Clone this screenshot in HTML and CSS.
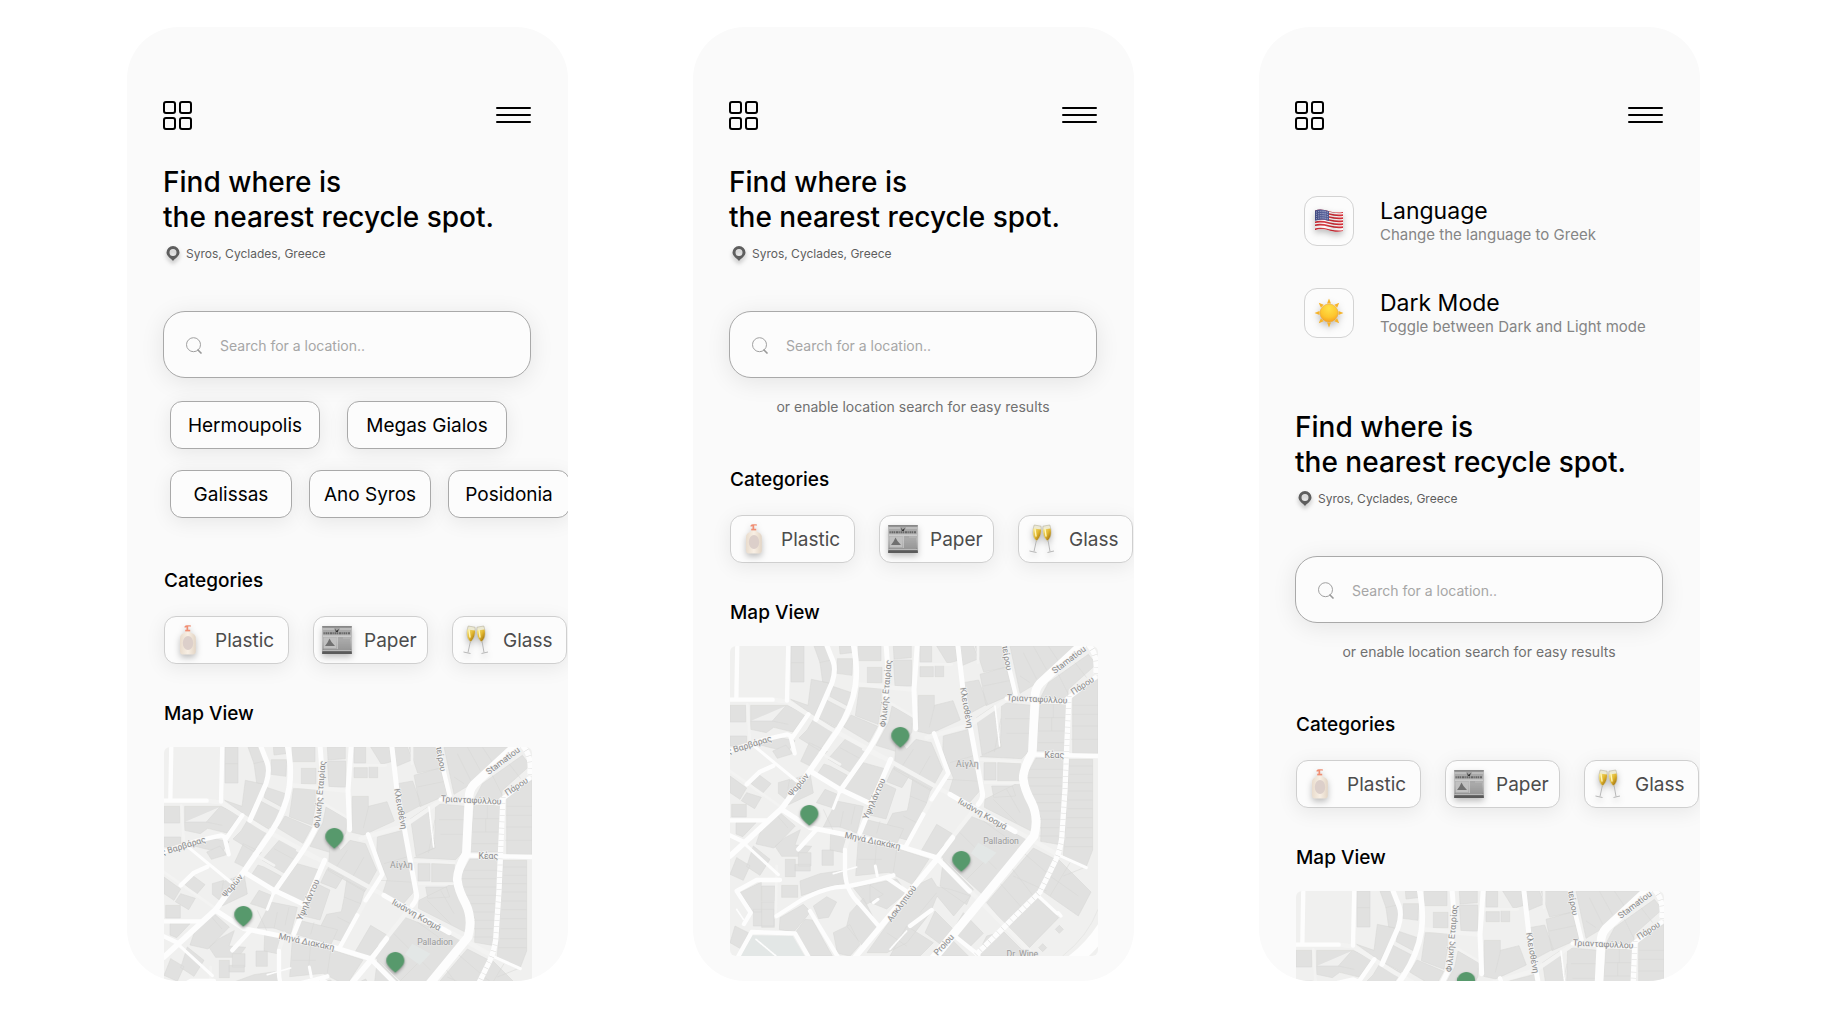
FILE: index.html
```html
<!DOCTYPE html>
<html lang="en">
<head>
<meta charset="utf-8">
<meta name="viewport" content="width=device-width, initial-scale=1">
<title>Recycle spots</title>
<link rel="stylesheet" href="styles.css">
</head>
<body>
<svg class="defs" width="0" height="0" aria-hidden="true">
  <defs>
    <linearGradient id="g-bottle" x1="0" x2="1"><stop offset="0" stop-color="#e9dccd"/><stop offset=".5" stop-color="#f8efe4"/><stop offset="1" stop-color="#e3d5c5"/></linearGradient>
    <linearGradient id="g-wine" x1="0" x2="1" y2="1"><stop offset="0" stop-color="#f7e88c"/><stop offset=".5" stop-color="#e0b52c"/><stop offset="1" stop-color="#8a5a08"/></linearGradient>
    <linearGradient id="g-paper" x1="0" x2="0" y1="0" y2="1"><stop offset="0" stop-color="#a2a2a2"/><stop offset=".5" stop-color="#b4b4b4"/><stop offset=".8" stop-color="#9a9a9a"/><stop offset="1" stop-color="#5d5d5d"/></linearGradient>
    <radialGradient id="g-sun" cx=".5" cy=".25" r=".8"><stop offset="0" stop-color="#ffe14a"/><stop offset=".6" stop-color="#fdc62e"/><stop offset="1" stop-color="#f59a1c"/></radialGradient>
    <linearGradient id="g-wave" x1="0" x2="1"><stop offset="0" stop-color="#000" stop-opacity=".12"/><stop offset=".35" stop-color="#fff" stop-opacity=".12"/><stop offset=".65" stop-color="#000" stop-opacity=".12"/><stop offset="1" stop-color="#fff" stop-opacity=".05"/></linearGradient>
  </defs>

  <symbol id="i-grid" viewBox="0 0 29 29"><g fill="none" stroke="#000" stroke-width="2"><rect x="1" y="1" width="11" height="11" rx="2"/><rect x="17" y="1" width="11" height="11" rx="2"/><rect x="1" y="17" width="11" height="11" rx="2"/><rect x="17" y="17" width="11" height="11" rx="2"/></g></symbol>
  <symbol id="i-menu" viewBox="0 0 35 16"><path d="M1 1H34M1 8H34M1 15H34" stroke="#000" stroke-width="2" stroke-linecap="round"/></symbol>
  <symbol id="i-place" viewBox="0 0 14 16"><path fill="#5e5e5e" fill-rule="evenodd" d="M7 0a6.500 6.500 0 0 1 6.500 6.500C13.500 10 9 12.500 7 15 5 12.500.5 10 .5 6.500A6.500 6.500 0 0 1 7 0Zm0 3a3.500 3.500 0 1 0 0 7 3.500 3.500 0 0 0 0-7Z"/></symbol>
  <symbol id="i-search" viewBox="0 0 17 17"><path d="M7.500.7a7 7 0 1 0 0 14 7 7 0 0 0 0-14Z" fill="none" stroke="#a0a0a0"/><path d="m11.500 12.500 4 4" stroke="#999" stroke-width="1.600"/></symbol>

  <symbol id="i-bottle" viewBox="0 0 30 30">
    <path d="M11.600 1.200C12.500.3 14 .2 18 .4v1.200h-2.800v3.200h2v1.900h-5V4.800h1.300V2.200c-.8 0-1.400.3-1.900.6Z" fill="#f08e73"/>
    <path d="M11.800 6.500h6v1.200c2.800.6 4.900 2.300 5 5.300v12.500c0 3-1 4-3 4h-9.800c-2 0-3-1-3-4V13c.1-3 2.100-4.700 4.800-5.300Z" fill="url(#g-bottle)"/>
    <ellipse cx="15" cy="18" rx="5.200" ry="7" fill="#dccfca"/>
  </symbol>
  <symbol id="i-paper" viewBox="0 0 30 30">
    <rect x=".3" y="1" width="29.400" height="28" fill="url(#g-paper)"/>
    <rect x=".3" y="1" width="29.400" height="1.600" fill="#888"/>
    <path d="M1 4H12M18 4H29" stroke="#d2d2d2"/>
    <path d="m13 3.500 1.500 2.200L17 4l-1.200 3h-2Z" fill="#333"/>
    <path d="M1.500 8.200H28.500" stroke="#666" stroke-width="2" stroke-dasharray="1.300 .7 2 .5"/>
    <rect x="1" y="10.600" width="28" height="1" fill="#ddd"/>
    <rect x="1.700" y="12.500" width="12.500" height="11" fill="#c0c0c0"/>
    <path d="m3 21 2.500-3.500 2-4 2 3.500L13 21Z" fill="#707070"/>
    <path d="M16 13H21M16 15H28M16 17H28M16 19H28M16 21H28M16 23H28M2 24.500H28" stroke="#999" stroke-width=".8"/>
    <path d="M15.200 12V24" stroke="#ccc"/>
    <rect x=".3" y="26.500" width="29.400" height="2.500" fill="#5a5a5a"/>
    <path d="M.5 25.500H29.500" stroke="#d0d0d0" stroke-width=".7"/>
  </symbol>
  <symbol id="i-glass" viewBox="0 0 30 30">
    <g fill="none" stroke="#b0b0b0" stroke-width=".9"><path d="M9.500 16 7 27.500M2.500 27l7 1.500M21 16l2 11.500M20.500 28.500l6.500-1.500"/></g>
    <path d="M7.200 1 14 2.200C14.600 8 13.500 14 9.500 17 5.500 14 5.200 7 7.200 1Z" fill="#ece9d2" stroke="#b6b09a" stroke-width=".6"/>
    <path d="M22.800 1 16 2.200c-.6 5.800.5 11.800 4.500 14.800 4-3 4.300-10 2.300-16Z" fill="#ece9d2" stroke="#b6b09a" stroke-width=".6"/>
    <path d="m6.500 4.500 7.500 1c0 4.500-1.500 9-4.500 11-3-2.500-4-7-3-12Z" fill="url(#g-wine)"/>
    <path d="m23.500 4.500-7.500 1c0 4.500 1.500 9 4.500 11 3-2.500 4-7 3-12Z" fill="url(#g-wine)"/>
    <path d="m8 5 1 7M18 5l1 7" stroke="#fff6b8" stroke-width="1.400" stroke-linecap="round"/>
  </symbol>
  <symbol id="i-flag" viewBox="0 0 30 24">
    <clipPath id="c-flag"><path d="M1 1.500C6-.3 10 .8 15 2.200s9 1.800 14 .8V22c-5 1.300-9 .8-14-.6S6 19.500 1 21.200Z"/></clipPath>
    <g clip-path="url(#c-flag)">
      <path fill="#fff" d="M0 0h30v24H0z"/>
      <g fill="none" stroke="#d3252f" stroke-width="1.600"><path d="M0 1.500C6-.5 10 .6 15 2s9 2 15 1"/><path d="M0 4.500C6 2.500 10 3.600 15 5s9 2 15 1"/><path d="M0 7.500C6 5.500 10 6.600 15 8s9 2 15 1"/><path d="M0 10.500C6 8.500 10 9.600 15 11s9 2 15 1"/><path d="M0 13.500c6-2 10-.9 15 .5s9 2 15 1"/><path d="M0 16.500c6-2 10-.9 15 .5s9 2 15 1"/><path d="M0 20.500c6-2 10-.9 15 .5s9 2 15 1"/></g>
      <path d="M0 0h15v12C10 10.500 6 10 0 12Z" fill="#45508f"/>
      <path d="M2 3.200q6-2 12 .2M2 5.400q6-2 12 .2M2 7.600q6-2 12 .2M2 9.800q6-2 12 .2" fill="none" stroke="#c9cde6" stroke-width=".9" stroke-dasharray="1 1.200"/>
      <path fill="url(#g-wave)" d="M0 0h30v24H0z"/>
    </g>
  </symbol>
  <symbol id="i-sun" viewBox="0 0 30 30">
    <g id="ray4"><path id="ray" d="m13 5.500 2-5 2 5Z" fill="#f6b32a"/><use href="#ray" transform="rotate(90 15 15)"/><use href="#ray" transform="rotate(180 15 15)"/><use href="#ray" transform="rotate(270 15 15)"/></g>
    <use href="#ray4" transform="rotate(45 15 15)"/>
    <circle cx="15" cy="15" r="9" fill="url(#g-sun)" stroke="#eda025" stroke-width=".5"/>
  </symbol>
  <symbol id="i-pin" viewBox="0 0 56 64"><path d="M28 1C43 1 55 12 55 27 55 40 40 52 28 63 16 52 1 40 1 27 1 12 13 1 28 1Z" fill="#57996c"/></symbol>

  <symbol id="map-ground" viewBox="0 0 1104 930">
    <path fill="#f0f0ef" d="M0 0h1104v930H0z"/>
    <g fill="#e1e1e0" stroke="#d6d6d5" stroke-width="1.500">
      <path d="M183 0h39v108h-39zM183 50h39M252 0h34l22 50-6 62-24-4-8-58zM268 50l36-8M244 100l58 12-50 98-70-50 52 18z"/>
      <path d="M0 178h47v50H0zM62 178h110l55 28-38 52-58-14-22 16-47-10zM62 225h65l40-45M127 225l48 10M0 270h50v30H0zM65 290l70-18 60 12-20 30-50-8z"/>
      <path d="M322 38h46l-2 50-46-6zM328 0h36l2 20-36 4zM305 120l60 20-8 42-56-30zM285 160l66 34-30 50-56-28zM385 0h68v44h-68zM412 64h44v46h-44zM388 125h66v50l-10 60-68-26zM490 0h54v35l-52 4zM490 42h55v78h-50zM486 180l62 34-2 44-42 60-66-20 38-70z"/>
      <path d="M363 207l80 34-26 48-76-46zM255 212l60 32-46 70-62-38 24-24zM238 290l54 26-44 48-36-18zM348 277l62 34-48 68-68-40zM330 305l70 38M300 360l52 28-20 36-70-40 20-30zM400 350l64 18-46 96-78-34z"/>
      <path d="M570 0h35v48h-35zM570 62h40v30h-40zM615 58h26v34h-26zM620 0h56l6 44-30 8zM565 148h48v30l56-14 22 58-92 42-36-8zM614 178l-16 66M700 110l46-8 26 72-56 30zM750 85l78-22 22 80-82 36zM760 120l78-16M735 0h80l22 62-76 16zM690 0h40l16 38-48 20zM840 0h200l-120 112-50 30z"/>
      <path d="M880 20l40 80M910 0l40 72M955 0l30 45M870 90l30 20M955 110l120-85 24 30-84 75-4 36-82-6zM985 85l30 60M1035 50l35 45"/>
      <path d="M740 215l50-34 24 122-58 24zM815 170l92 8-8 134-24 26-124-6 60-30zM825 218h78M830 262h72M813 218l-20 100M930 175h80v140h-92zM928 215h83M926 255h82M924 290h82M970 175v40M965 215v40"/>
      <path d="M918 336h86l-14 260-58-10 2-68-46-92 2-40zM892 370h108M890 395h108M890 420h108M898 445h98M910 470h84M918 495h74M926 520h66M930 545h58M928 570h58"/>
      <path d="M1028 145l76-45v222h-76zM1028 178h76M1026 205h78M1026 240h78M1024 280h80M1018 340h70v272l-20 52-68-34zM1018 360h70M1018 385h70M1016 410h72M1014 435h74M1014 462h74M1012 488h76M1010 515h78M1010 545h78M1008 575h80M1004 602h84"/>
      <path d="M803 350h68v56h-68zM762 350h36v52h-36zM785 420h62l10 30-66 4zM640 270l76-20 28 90 4 96-30 34-62-30 14-44-32-80zM660 350l82-24M650 400l100 6M765 460l100-50 50 78-6 70-146-74zM790 460l70 70M830 430l40 70"/>
      <path d="M500 270l30 40 28-30 46 10 34 80-36 64-110-64zM550 310l-40 60M600 330l-40 70M490 365l48 24-22 36-46-18zM548 400l54 30-20 66-44 88-80-22 30-60 44-8 8-40zM540 450l50 20M520 510l48 24M448 405l50 24-30 90-50-12z"/>
      <path d="M405 520l116 28-20 44-106-30zM450 526l-10 36M620 535l50 30-54 62-44-10zM720 510l180 70-140 168-130-120zM690 560l110 110M760 525l70 50M790 620l-80 80"/>
      <path d="M175 405l65-24 10 60-76 36zM285 430l40 16-16 40-50-16zM320 465l80 16-20 80-50-18-50 0zM340 495l-10 50M375 480l-12 55M280 490l30 65"/>
      <path d="M145 410l34-10-12 60-22-18zM85 385l38 28-26 30-34-30zM128 315l40-18 20 26-46 14zM0 390l50 36-20 34-30-20zM50 440l44 14-20 34-40-24zM5 475h44v38H5zM18 530h60l-40 42-20-8zM100 530l50-30 46 40-64 66-54-12zM134 500l40 46M165 575l46-24-16 46 50 4-22 30h-68l-20-30z"/>
      <path d="M276 612h34v46h-34zM205 620h38v40h-38zM166 640h30v52h-30zM195 655h46v20h-46zM70 600l50 40-30 48-40-26zM20 635l40 24-20 44-40-18zM302 560l46 10-8 50-40-8z"/>
      <path d="M385 575l120 34 92 30-50 76-70-36-100 10zM440 590l-6 70M500 610l-10 68M385 640h70M210 705l60-22 70-10 4 40-60 12-70 24zM155 718h48v36h-48zM95 720h40v46H95zM95 768h38v76H95zM30 740l64-32v90H70zM70 790h62v50H70z"/>
      <path d="M150 815l70-40 22 22-50 60-44-6zM250 780l40-28 30 16-24 46-30 4zM225 820l22 2 60 108h-66l-48-66zM15 840l40 20-20 50-35-20zM360 800l40-44 46 90-46 56-50-62zM310 860l50-24 30 60-30 34-38-8zM370 725l46-10 44 30-50 30zM420 715l80-16 30 40-60 50-50-20z"/>
      <path d="M555 720l50-24 16 26 40 8 60 20-50 60-50-60-20 50-70 90-60 30h-60zM530 840l80 50-40 40h-90zM620 740l-50 60M470 860l60 40M615 795l60 60-30 50-60-45zM640 640l90 90-20 46-80-56zM700 800l60 62-40 40-54-44z"/>
      <path d="M770 770l140-164 66 34-40 100-110 96zM800 700l80 90M840 660l70 90M880 620l70 60M850 690l100 45M985 640l98 98-38 72-112-78zM1000 690l60-24M960 690l85 60M1020 650l-60 100M920 755l66 60-88 90-66-66zM770 870l50-14 60 60v14H740zM605 930l50-60 60 60z"/>
      <path d="M988 838l12 12-12 12-12-12zM938 893l12 12-12 12-12-12z"/>
    </g>
    <path fill="#e3e7e6" d="M68 868l120 2 36 60H30zM745 590l54 30-32 34-44-32z"/>

    <g fill="none" stroke="#f3f3f2" stroke-linecap="round" stroke-linejoin="round">
      <path stroke-width="13" d="M130 161l42 6 128 80 180 98 180 100M840 545l145 82M590 275l130-38 112-77M745 475L650 595M720 735l180 182M605 460l-25 45M360 560l-15 50M388 115l157 16"/>
      <path stroke-width="8" d="M480 170l70 42M745 340l125 8M765 410h100M52 175l8 115M140 660l-3 155M0 375l155 110M270 320l60 35M400 310l50 24M744 0v50M565 55h100"/>
    </g>
    <g fill="none" stroke="#fdfdfd" stroke-linecap="round" stroke-linejoin="round">
      <path stroke-width="13" d="M22-8l-3 166M0 161h128M175-8l-4 172M235 205l-47 68-16-8-70 16-100 32M182 272l12 50M50 415l40-38 40-18M0 523h110M205 610l55-60M612 262l43 120-50 78M580 505l-52 95M820-8l37 155M830 157l95 5 90 8M900 325l204 5M345 612v70q4 55 45 93l60 70M140 810l75-48q75-40 130-40 50-8 145-34M470 695l58 40M0 568l42 20M150 702H80l-60 33 42 65-20 34M20 940l45-82 130 4 45 78M240 795l85 140M540 840l65-48M680 875l65 52M1010 160l86-66"/>
      <path stroke-width="9" d="M60 290l140 115M40 590l105 96M436 660l6 30M985 627l84 38M920 745l62 58M330 435l-20 52M430 770l14-10"/>
      <path stroke-width="15" d="M288-8l22 56q8 26-4 62l-48 110M468-8l5 70-11 163q-22 55-62 110l-70 100M562-8l-10 138 5 118M683-8l17 148 22 110 36 195q0 16-13 30M240 375l90 55 95 45M482 340l-52 120-40 100M155 490l85 55 120 24 150 32 110 34 98 100M660 445l195 112M668 575l-48 64"/>
      <path stroke-width="17" d="M370-8q14 68 6 128-11 70-54 135l-82 118-85 115L0 630M620 640L370 940"/>
      <path stroke-width="26" d="M1060-8L930 112q-16 18-15 43l-8 165q-30 55-27 80 3 30 25 70 22 46 7 100L610 938"/>
      <path stroke-width="5" stroke-dasharray="5 3" d="M795 180l14 120M310 683l70-20M78 880l60 50M20 790l20 30M480 910l50-55"/>
      <path stroke-width="40" d="M1130 830q-40 70-110 122"/>
      <path stroke-width="10" d="M985 800l8 10"/>
    </g>
    <path fill="none" stroke="#fdfdfd" stroke-width="16" stroke-linejoin="round" d="M1017 150l-8 180-4 100-10 150q-4 30-17 60l-48 98-110 108-84 82M1075-5q30 30 22 90"/>
    <path fill="none" stroke="#dcdcdb" stroke-width="16" stroke-dasharray="1.500 17" d="M1017 150l-8 180-4 100-10 150q-4 30-17 60l-48 98-110 108-84 82M1075-5q30 30 22 90"/>
    <path fill="none" stroke="#e2e2e1" stroke-width="2" d="M1104 790q-30 80-106 140"/>
  </symbol>
  <symbol id="map-pins" viewBox="0 0 1104 930">
    <g class="pins"><use href="#i-pin" x="483" y="242" width="56" height="64"/><use href="#i-pin" x="210" y="476" width="56" height="64"/><use href="#i-pin" x="666" y="614" width="56" height="64"/></g>
  </symbol>
</svg>

<main class="board">
  <section class="phone">
    <header class="bar">
      <button class="icon-btn" aria-label="Dashboard"><svg width="29" height="29"><use href="#i-grid"/></svg></button>
      <button class="icon-btn" aria-label="Menu"><svg width="35" height="16"><use href="#i-menu"/></svg></button>
    </header>
    <h1 class="title">Find where is<br>the nearest recycle spot.</h1>
    <p class="place"><svg width="14" height="16" aria-hidden="true"><use href="#i-place"/></svg>Syros, Cyclades, Greece</p>
    <label class="search"><svg width="17" height="17" aria-hidden="true"><use href="#i-search"/></svg><input type="text" aria-label="Search for a location" placeholder="Search for a location.."></label>
    <div class="towns">
      <div class="town-row town-row-wide"><button class="chip town">Hermoupolis</button><button class="chip town town-long">Megas Gialos</button></div>
      <div class="town-row"><button class="chip town">Galissas</button><button class="chip town">Ano Syros</button><button class="chip town">Posidonia</button></div>
    </div>
    <div class="results">
      <h2 class="heading">Categories</h2>
      <div class="categories">
        <button class="chip category plastic"><svg width="30" height="30" aria-hidden="true"><use href="#i-bottle"/></svg>Plastic</button>
        <button class="chip category"><svg width="30" height="30" aria-hidden="true"><use href="#i-paper"/></svg>Paper</button>
        <button class="chip category"><svg width="30" height="30" aria-hidden="true"><use href="#i-glass"/></svg>Glass</button>
      </div>
      <h2 class="heading">Map View</h2>
      <svg class="map" viewBox="0 0 1104 930">
        <use href="#map-ground"/>
        <text transform="translate(476 143) rotate(-85)">Φιλικής Εταιρίας</text>
        <text transform="translate(701 187) rotate(80)">Κλεισθένη</text>
        <text transform="translate(822 34) rotate(80)">πείρου</text>
        <text transform="translate(1022 48) rotate(-37)">Stamatiou</text>
        <text transform="translate(1062 126) rotate(-33)">Πάρου</text>
        <text transform="translate(921 168) rotate(3)">Τριανταφύλλου</text>
        <text transform="translate(973 335)">Κέας</text>
        <text class="poi" transform="translate(712 364)">Αίγλη</text>
        <text transform="translate(60 305) rotate(-17)">ς Βαρβάρας</text>
        <text transform="translate(212 422) rotate(-50)">Ψαρών</text>
        <text transform="translate(440 462) rotate(-66)">Υψηλάντου</text>
        <text transform="translate(426 593) rotate(12)">Μηνά Διακάκη</text>
        <text transform="translate(753 511) rotate(30)">Ιωάννη Κοσμά</text>
        <text class="poi" transform="translate(813 594)">Palladion</text>
        <use href="#map-pins"/>
      </svg>
    </div>
  </section>

  <section class="phone">
    <header class="bar">
      <button class="icon-btn" aria-label="Dashboard"><svg width="29" height="29"><use href="#i-grid"/></svg></button>
      <button class="icon-btn" aria-label="Menu"><svg width="35" height="16"><use href="#i-menu"/></svg></button>
    </header>
    <h1 class="title">Find where is<br>the nearest recycle spot.</h1>
    <p class="place"><svg width="14" height="16" aria-hidden="true"><use href="#i-place"/></svg>Syros, Cyclades, Greece</p>
    <label class="search"><svg width="17" height="17" aria-hidden="true"><use href="#i-search"/></svg><input type="text" aria-label="Search for a location" placeholder="Search for a location.."></label>
    <p class="hint">or enable location search for easy results</p>
    <div class="results">
      <h2 class="heading">Categories</h2>
      <div class="categories">
        <button class="chip category plastic"><svg width="30" height="30" aria-hidden="true"><use href="#i-bottle"/></svg>Plastic</button>
        <button class="chip category"><svg width="30" height="30" aria-hidden="true"><use href="#i-paper"/></svg>Paper</button>
        <button class="chip category"><svg width="30" height="30" aria-hidden="true"><use href="#i-glass"/></svg>Glass</button>
      </div>
      <h2 class="heading">Map View</h2>
      <svg class="map" viewBox="0 0 1104 930">
        <use href="#map-ground"/>
        <text transform="translate(476 143) rotate(-85)">Φιλικής Εταιρίας</text>
        <text transform="translate(701 187) rotate(80)">Κλεισθένη</text>
        <text transform="translate(822 34) rotate(80)">πείρου</text>
        <text transform="translate(1022 48) rotate(-37)">Stamatiou</text>
        <text transform="translate(1062 126) rotate(-33)">Πάρου</text>
        <text transform="translate(921 168) rotate(3)">Τριανταφύλλου</text>
        <text transform="translate(973 335)">Κέας</text>
        <text class="poi" transform="translate(712 364)">Αίγλη</text>
        <text transform="translate(60 305) rotate(-17)">ς Βαρβάρας</text>
        <text transform="translate(212 422) rotate(-50)">Ψαρών</text>
        <text transform="translate(440 462) rotate(-66)">Υψηλάντου</text>
        <text transform="translate(426 593) rotate(12)">Μηνά Διακάκη</text>
        <text transform="translate(753 511) rotate(30)">Ιωάννη Κοσμά</text>
        <text class="poi" transform="translate(813 594)">Palladion</text>
        <text transform="translate(522 778) rotate(-53)">Ασκληπιού</text>
        <text transform="translate(648 902) rotate(-48)">Proiou</text>
        <text class="poi" transform="translate(877 934)">Dr. Wine</text>
        <use href="#map-pins"/>
      </svg>
    </div>
  </section>

  <section class="phone">
    <header class="bar">
      <button class="icon-btn" aria-label="Dashboard"><svg width="29" height="29"><use href="#i-grid"/></svg></button>
      <button class="icon-btn" aria-label="Menu"><svg width="35" height="16"><use href="#i-menu"/></svg></button>
    </header>
    <div class="settings">
      <button class="setting"><span class="tile"><svg width="30" height="24" aria-hidden="true"><use href="#i-flag"/></svg></span><span class="setting-text"><span class="setting-name">Language</span><span class="setting-note">Change the language to Greek</span></span></button>
      <button class="setting"><span class="tile"><svg width="30" height="30" aria-hidden="true"><use href="#i-sun"/></svg></span><span class="setting-text"><span class="setting-name">Dark Mode</span><span class="setting-note">Toggle between Dark and Light mode</span></span></button>
    </div>
    <h1 class="title">Find where is<br>the nearest recycle spot.</h1>
    <p class="place"><svg width="14" height="16" aria-hidden="true"><use href="#i-place"/></svg>Syros, Cyclades, Greece</p>
    <label class="search"><svg width="17" height="17" aria-hidden="true"><use href="#i-search"/></svg><input type="text" aria-label="Search for a location" placeholder="Search for a location.."></label>
    <p class="hint">or enable location search for easy results</p>
    <div class="results">
      <h2 class="heading">Categories</h2>
      <div class="categories">
        <button class="chip category plastic"><svg width="30" height="30" aria-hidden="true"><use href="#i-bottle"/></svg>Plastic</button>
        <button class="chip category"><svg width="30" height="30" aria-hidden="true"><use href="#i-paper"/></svg>Paper</button>
        <button class="chip category"><svg width="30" height="30" aria-hidden="true"><use href="#i-glass"/></svg>Glass</button>
      </div>
      <h2 class="heading">Map View</h2>
      <svg class="map" viewBox="0 0 1104 930">
        <use href="#map-ground"/>
        <text transform="translate(476 143) rotate(-85)">Φιλικής Εταιρίας</text>
        <text transform="translate(701 187) rotate(80)">Κλεισθένη</text>
        <text transform="translate(822 34) rotate(80)">πείρου</text>
        <text transform="translate(1022 48) rotate(-37)">Stamatiou</text>
        <text transform="translate(1062 126) rotate(-33)">Πάρου</text>
        <text transform="translate(921 168) rotate(3)">Τριανταφύλλου</text>
        <use href="#map-pins"/>
      </svg>
    </div>
  </section>
</main>
</body>
</html>
```
FILE: styles.css
```css
* { box-sizing: border-box; }

body {
  margin: 0;
  background: #fff;
  color: #000;
  font-family: Inter, "Liberation Sans", sans-serif;
}

h1, h2, p { margin: 0; font-weight: 500; }

button, input { font: inherit; color: inherit; }

button { margin: 0; padding: 0; border: 0; background: none; cursor: pointer; }

svg { display: block; flex: none; }

.defs { position: absolute; }

.board {
  display: grid;
  grid-template-columns: repeat(3, minmax(0, 1fr));
  gap: 125px;
  height: 100vh;
  padding: 27px 127px 28px;
}

.phone {
  min-height: 0;
  overflow: hidden;
  padding: 74px 37px 0 36px;
  border-radius: 52px;
  background: #fafafa;
}

.bar { display: flex; align-items: center; justify-content: space-between; height: 28px; }

.title { margin-top: 36px; font-size: 28px; line-height: 35px; white-space: nowrap; }

.place {
  display: flex;
  align-items: center;
  gap: 6px;
  margin-top: 10px;
  padding-left: 3px;
  color: #5e5e5e;
  font-size: 12px;
  font-weight: 400;
  line-height: 18px;
}

.place svg { filter: drop-shadow(0 3px 2px rgba(0, 0, 0, .25)); }

.search {
  display: flex;
  align-items: center;
  gap: 17px;
  height: 67px;
  margin-top: 48px;
  padding: 1px 22px 0;
  border: 1px solid #a9a9a9;
  border-radius: 22px;
  background: #fcfcfc;
  box-shadow: 0 4px 24px rgba(0, 0, 0, .09);
}

.search input {
  flex: 1;
  min-width: 0;
  padding: 0;
  border: 0;
  outline: 0;
  background: none;
  font-size: 14px;
}

.search input::placeholder { color: #a6a6a6; opacity: 1; }

.hint {
  margin-top: 19px;
  color: #707070;
  font-size: 14px;
  font-weight: 400;
  line-height: 20px;
  text-align: center;
}

.chip {
  flex: none;
  height: 48px;
  border: 1px solid #a9a9a9;
  border-radius: 12px;
  background: #fcfcfc;
  box-shadow: 0 4px 20px rgba(0, 0, 0, .08);
  font-size: 19px;
}

.towns { display: grid; gap: 21px; margin-top: 23px; padding-left: 7px; }

.town-row { display: flex; gap: 17px; }

.town-row-wide { gap: 27px; }

.town { width: 122px; }

.town-row-wide .town { width: 150px; }

.town-row-wide .town-long { width: 160px; }

.results { margin: 51px -1px 0 1px; }

.heading { font-size: 19px; line-height: 24px; }

.categories { display: flex; gap: 24px; margin-top: 23px; }

.category {
  display: flex;
  align-items: center;
  gap: 12px;
  width: 115px;
  padding-left: 8px;
  border-color: #cfcfcf;
  color: #4c4c4c;
}

.plastic { width: 125px; }

.category svg, .tile svg { filter: drop-shadow(0 3px 3px rgba(0, 0, 0, .25)); }

.categories + .heading { margin-top: 38px; }

.map {
  width: 100%;
  margin-top: 21px;
  border-radius: 6px;
}

.map text {
  fill: #8b8b8b;
  stroke: #f2f2f2;
  stroke-width: 4px;
  paint-order: stroke;
  font-family: Roboto, sans-serif;
  font-size: 26px;
  text-anchor: middle;
}

.map .poi { fill: #999; stroke: #e6e6e6; }

.pins { filter: drop-shadow(0 5px 5px rgba(0, 0, 0, .35)); }

.settings { display: grid; gap: 42px; margin-top: 67px; padding-left: 9px; }

.settings + .title { margin-top: 72px; }

.setting { display: flex; align-items: center; gap: 26px; text-align: left; }

.tile {
  display: grid;
  place-items: center;
  width: 50px;
  height: 50px;
  border: 1px solid #d3d3d3;
  border-radius: 13px;
  background: #fcfcfc;
}

.setting-text { display: grid; white-space: nowrap; }

.setting-name { font-size: 23px; line-height: 27px; }

.setting-note { color: #858585; font-size: 15px; line-height: 19px; }
```
